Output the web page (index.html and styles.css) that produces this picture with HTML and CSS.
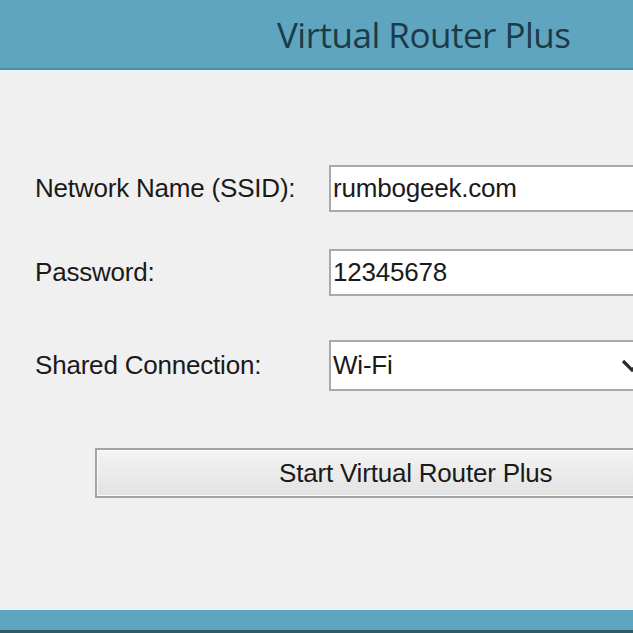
FILE: index.html
```html
<!DOCTYPE html>
<html lang="en">
<head>
    <meta charset="UTF-8">
    <meta name="viewport" content="width=device-width, initial-scale=1.0">
    <title>Virtual Router Plus</title>
    <link rel="stylesheet" href="styles.css">
</head>
<body>
    <div class="window">
        <div class="titlebar">
            <h1 class="title">Virtual Router Plus</h1>
        </div>
        <div class="content">
            <div class="row">
                <label class="label" for="ssid">Network Name (SSID):</label>
                <div class="field" id="ssid">rumbogeek.com</div>
            </div>
            <div class="row">
                <label class="label" for="password">Password:</label>
                <div class="field" id="password">12345678</div>
            </div>
            <div class="row row-select">
                <label class="label" for="shared">Shared Connection:</label>
                <div class="field field-select" id="shared">
                    <span>Wi-Fi</span>
                    <svg class="chevron" width="22" height="14" viewBox="0 0 22 14">
                        <path d="M2 2 L11 11 L20 2" fill="none" stroke="#2a2a2a" stroke-width="3.2"/>
                    </svg>
                </div>
            </div>
            <button class="start" type="button">Start Virtual Router Plus</button>
        </div>
        <div class="statusbar"></div>
    </div>
</body>
</html>
```

FILE: styles.css
```css
body {
    margin: 0;
    padding: 0;
    background-color: #f0f0f0;
    font-family: "Liberation Sans", Arial, sans-serif;
    overflow: hidden;
}
.window {
    width: 633px;
    height: 633px;
    display: flex;
    flex-direction: column;
    overflow: hidden;
}
.titlebar {
    height: 70px;
    background-color: #5fa5bf;
    border-bottom: 2px solid #4f8ea6;
    box-shadow: 0 3px 0 #e6f3f7;
    display: flex;
    align-items: center;
    padding-left: 277px;
    box-sizing: border-box;
    flex-shrink: 0;
}
.title {
    margin: 0;
    font-family: "Open Sans", "Noto Sans", sans-serif;
    font-weight: normal;
    font-size: 35px;
    color: #1d3b47;
    letter-spacing: -0.5px;
    padding-top: 1px;
}
.content {
    flex: 1;
    padding: 95px 0 0 35px;
    box-sizing: border-box;
    overflow: hidden;
}
.row {
    display: flex;
    align-items: center;
    height: 47px;
    margin-bottom: 37px;
}
.row-select {
    height: 51px;
    margin-top: 44px;
    margin-bottom: 57px;
}
.label {
    width: 294px;
    font-size: 26px;
    color: #1a1a1a;
    letter-spacing: -0.2px;
}
.field {
    flex: 1;
    height: 100%;
    margin-right: -20px;
    background-color: #fff;
    border: 2px solid #a9a9a9;
    box-sizing: border-box;
    padding-left: 2px;
    display: flex;
    align-items: center;
    font-size: 26px;
    color: #1a1a1a;
    letter-spacing: -0.2px;
}
.field-select {
    justify-content: space-between;
    padding-right: 8px;
}
.start {
    display: block;
    margin-left: 60px;
    width: 600px;
    height: 50px;
    background: linear-gradient(#f4f4f4, #e2e2e2);
    border: 2px solid #a4a4a4;
    box-shadow: inset 0 0 0 1px #fbfbfb;
    font-family: "Liberation Sans", Arial, sans-serif;
    font-size: 26px;
    color: #1a1a1a;
    letter-spacing: -0.2px;
    padding: 0;
    text-align: left;
    text-indent: 182px;
}
.statusbar {
    height: 20px;
    background-color: #5fa5bf;
    border-bottom: 3px solid #2f5a6a;
    box-shadow: 0 -3px 0 #e6f3f7;
    flex-shrink: 0;
}
```
